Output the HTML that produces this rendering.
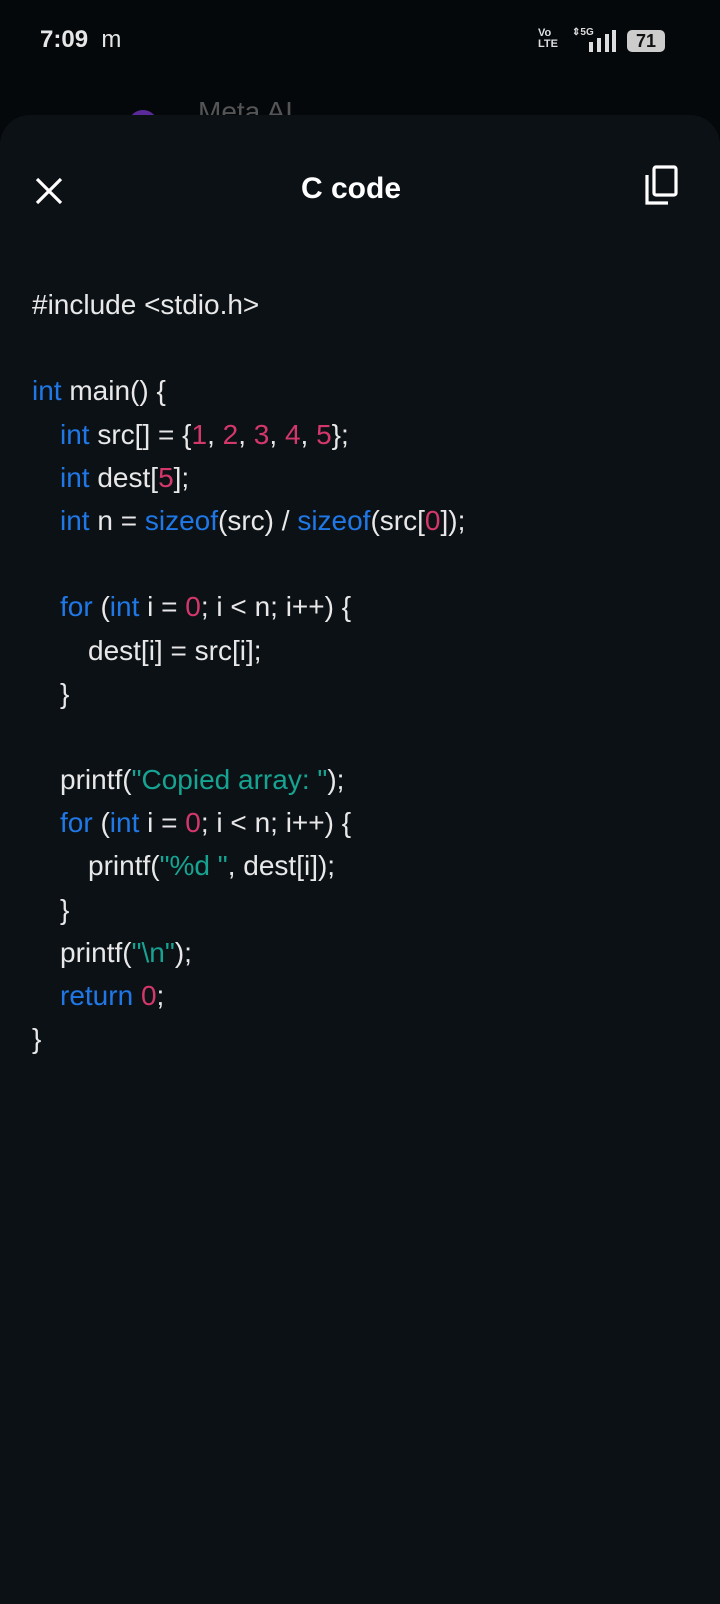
<!DOCTYPE html>
<html><head><meta charset="utf-8"><style>
body{margin:0;width:720px;height:1604px;background:#05080b;font-family:"Liberation Sans",sans-serif;overflow:hidden;position:relative}
.st{position:absolute;top:26px;left:40px;color:#e6e6e6;font-size:24px;font-weight:bold}
.sheet{position:absolute;top:115px;left:0;width:720px;height:1489px;background:#0c1116;border-radius:30px 30px 0 0}
.title{position:absolute;top:172px;left:0;width:702px;text-align:center;color:#fff;font-size:30px;font-weight:bold}
.code{position:absolute;top:283px;left:32px;font-size:28px;line-height:43.2px;color:#e8e8e8}
.code div{height:43.2px;white-space:pre}
.i1{padding-left:28px}.i2{padding-left:56px}
.k{color:#1f78e6}.n{color:#d4376a}.s{color:#16a391}
</style></head><body>
<div class="st">7:09&nbsp; <span style="font-weight:normal">m</span></div>
<div style="position:absolute;top:28px;left:538px;color:#ddd;font-size:11px;font-weight:bold;line-height:11px">Vo<br>LTE</div>
<div style="position:absolute;top:27px;left:572px;color:#ddd;font-size:10px;font-weight:bold">⇕5G</div>
<div style="position:absolute;left:589px;top:42px;width:4px;height:10px;background:#ddd"></div>
<div style="position:absolute;left:597px;top:38px;width:4px;height:14px;background:#ddd"></div>
<div style="position:absolute;left:605px;top:34px;width:4px;height:18px;background:#ddd"></div>
<div style="position:absolute;left:612px;top:30px;width:4px;height:22px;background:#ddd"></div>
<div style="position:absolute;left:627px;top:30px;width:38px;height:22px;background:#ccc;border-radius:5px;color:#111;font-weight:bold;font-size:18px;text-align:center;line-height:22px">71</div>
<div style="position:absolute;left:128px;top:110px;width:30px;height:30px;border-radius:50%;background:#5b2a9a"></div>
<div style="position:absolute;left:198px;top:96px;color:#555;font-size:28px">Meta AI</div>
<div class="sheet"></div>
<svg style="position:absolute;left:35px;top:177px" width="28" height="28" viewBox="0 0 28 28"><path d="M2 2L26 26M26 2L2 26" stroke="#fff" stroke-width="3.2"/></svg>
<div class="title">C code</div>
<svg style="position:absolute;left:644px;top:165px" width="36" height="42" viewBox="0 0 36 42"><rect x="10" y="2" width="22" height="28" rx="2" fill="none" stroke="#fff" stroke-width="3.2"/><path d="M3 10V38H24" fill="none" stroke="#fff" stroke-width="3.2"/></svg>
<div class="code"><div>#include &lt;stdio.h&gt;</div><div></div><div><span class="k">int</span> main() {</div><div class="i1"><span class="k">int</span> src[] = {<span class="n">1</span>, <span class="n">2</span>, <span class="n">3</span>, <span class="n">4</span>, <span class="n">5</span>};</div><div class="i1"><span class="k">int</span> dest[<span class="n">5</span>];</div><div class="i1"><span class="k">int</span> n = <span class="k">sizeof</span>(src) / <span class="k">sizeof</span>(src[<span class="n">0</span>]);</div><div></div><div class="i1"><span class="k">for</span> (<span class="k">int</span> i = <span class="n">0</span>; i &lt; n; i++) {</div><div class="i2">dest[i] = src[i];</div><div class="i1">}</div><div></div><div class="i1">printf(<span class="s">"Copied array: "</span>);</div><div class="i1"><span class="k">for</span> (<span class="k">int</span> i = <span class="n">0</span>; i &lt; n; i++) {</div><div class="i2">printf(<span class="s">"%d "</span>, dest[i]);</div><div class="i1">}</div><div class="i1">printf(<span class="s">"\n"</span>);</div><div class="i1"><span class="k">return</span> <span class="n">0</span>;</div><div>}</div></div>
</body></html>
